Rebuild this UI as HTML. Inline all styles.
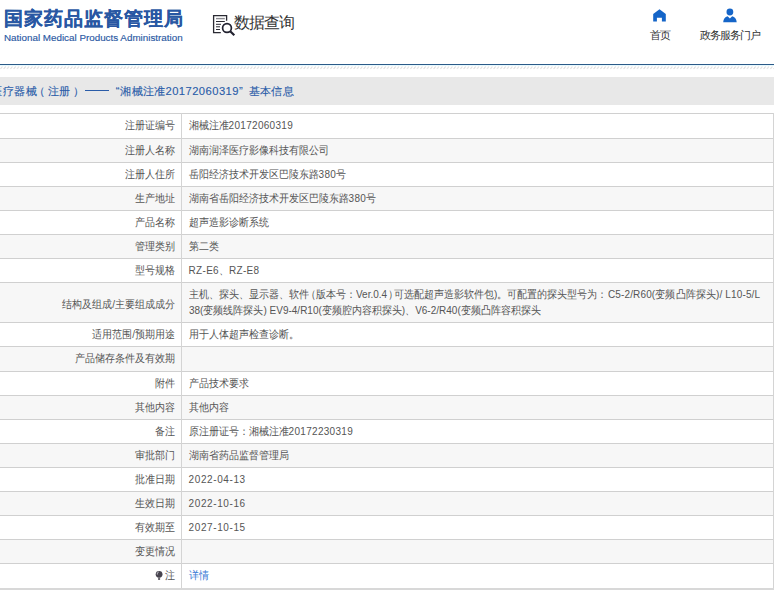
<!DOCTYPE html>
<html><head><meta charset="utf-8">
<style>
*{margin:0;padding:0;box-sizing:border-box}
html,body{width:774px;height:594px;overflow:hidden;background:#fff;font-family:"Liberation Sans",sans-serif;color:#333}
.abs{position:absolute}
.logo1{position:absolute;left:4px;top:6.5px;font-size:18.6px;font-weight:bold;color:#2857a3;letter-spacing:1px;white-space:nowrap;line-height:24px;-webkit-text-stroke:0.15px #2857a3}
.logo2{position:absolute;left:4px;top:32px;font-size:9.83px;color:#2a59a3;white-space:nowrap;line-height:12px;-webkit-text-stroke:0.15px #2a59a3}
.sq{position:absolute;left:234px;top:13px;font-size:16px;letter-spacing:-1.05px;color:#333;white-space:nowrap;line-height:20px}
.nav{position:absolute;top:29px;font-size:10.5px;letter-spacing:-1.05px;color:#333;white-space:nowrap;line-height:12px}
.bl{position:absolute;left:0;top:64px;width:774px;height:1px;background:#2c5a88}
.cy{position:absolute;left:0;top:65px;width:774px;height:1px;background:#e6f8fd}
.hatch{position:absolute;left:0;top:66px;width:774px;height:3px;background:repeating-linear-gradient(135deg,#fff 0,#fff 1.4px,#e2e2e2 1.4px,#e2e2e2 2.4px)}
.crumb{position:absolute;left:0;top:77px;width:774px;height:28px;background:#e8e8e8}
.ct{position:absolute;top:84px;font-size:11.2px;color:#2a5ca8;-webkit-text-stroke:0.12px #2a5ca8;white-space:nowrap;line-height:14px}
.dash{position:absolute;left:85px;top:90px;width:24px;height:1px;background:#2a5ca8}
.r{position:absolute;left:-10px;width:784px;border-top:1px solid #d0d0d0}
.r .l{position:absolute;left:0;width:185px;top:0;bottom:0;text-align:right;font-size:10px;line-height:22px;color:#555;white-space:nowrap}
.r .v{position:absolute;left:198.6px;top:0;font-size:10px;line-height:22px;color:#555;white-space:nowrap}
.dbl .l{line-height:39px}
.r .l,.r .v{transform:translateY(1px) scaleY(1.1);transform-origin:50% 11px}
.seg,.seg2{transform:scaleY(1.1);transform-origin:50% 8px}
.seg{position:absolute;top:287px;font-size:10px;line-height:16px;color:#555;white-space:nowrap}
.seg2{position:absolute;left:189px;top:303px;font-size:10px;line-height:16px;color:#555;white-space:nowrap}
.vline{position:absolute;left:181px;top:113px;width:1px;height:476px;background:#d4d4d4}
.rline{position:absolute;left:773px;top:113px;width:1px;height:476px;background:#d4d4d4}
.bot{position:absolute;left:0;top:588px;width:774px;height:2px;background:#d8d8d8}
.lnk{color:#3a7bd5}
.n{letter-spacing:0.3px}
.n2{letter-spacing:0.6px}
</style></head><body>
<div class="logo1">国家药品监督管理局</div>
<div class="logo2">National Medical Products Administration</div>
<svg class="abs" style="left:206px;top:8px" width="40" height="34" viewBox="206 8 40 34">
<path d="M220.8 32.6H213.6V15.6H226.6V20.8" fill="none" stroke="#2a2a33" stroke-width="1.3"/>
<path d="M216 18.6h8.8" stroke="#8a8a90" stroke-width="1.4"/>
<path d="M216 21.5h8.8M216 24.3h5M216 26.8h4M216 29.5h4" stroke="#2a2a33" stroke-width="1"/>
<circle cx="227" cy="28" r="4.4" fill="none" stroke="#222230" stroke-width="1.7"/>
<path d="M230.2 31.2L234.3 35.3" stroke="#222230" stroke-width="2.2"/>
</svg>
<div class="sq">数据查询</div>
<svg class="abs" style="left:646px;top:4px" width="26" height="22" viewBox="646 4 26 22">
<path d="M659.5 9.2L653.2 14V21.6H656.9V17.7H661.9V21.6H665.8V14Z" fill="#1565c8"/>
</svg>
<div class="nav" style="left:650px;letter-spacing:-1px">首页</div>
<svg class="abs" style="left:718px;top:4px" width="26" height="22" viewBox="718 4 26 22">
<circle cx="729.9" cy="12" r="3.4" fill="#1565c8"/>
<path d="M723.2 22.3C723.4 19 725 17 727.6 16.2L729.9 18.5L732.2 16.2C734.8 17 736.5 19 736.7 22.3Z" fill="#1565c8"/>
</svg>
<div class="nav" style="left:700px">政务服务门户</div>
<div class="bl"></div>
<div class="cy"></div><svg class="abs" style="left:0;top:65px" width="774" height="5"><defs><pattern id="hp" width="3.333" height="5" patternUnits="userSpaceOnUse"><path d="M0.4 3.9L2.4 1.5" stroke="#d6d6d6" stroke-width="0.85"/></pattern></defs><rect width="774" height="5" fill="url(#hp)"/></svg>
<div class="crumb"></div>
<div class="ct" style="left:-8.6px;letter-spacing:0.5px">医疗器械</div>
<div class="ct" style="left:34px">（</div>
<div class="ct" style="left:48px">注册</div>
<div class="ct" style="left:72.5px">）</div>
<div class="dash"></div>
<div class="ct" style="left:115.8px">“</div>
<div class="ct" style="left:120.4px;letter-spacing:0.3px">湘械注准</div>
<div class="ct" style="left:165.5px;letter-spacing:0.45px">20172060319</div>
<div class="ct" style="left:239px">”</div>
<div class="ct" style="left:248.5px;letter-spacing:0.35px">基本信息</div>
<div class="r" style="top:113px;height:25px;background:#ffffff"><div class="l">注册证编号</div><div class="v">湘械注准<span class="n">20172060319</span></div></div><div class="r" style="top:138px;height:24px;background:#f7f7f7"><div class="l">注册人名称</div><div class="v">湖南润泽医疗影像科技有限公司</div></div><div class="r" style="top:162px;height:24px;background:#ffffff"><div class="l">注册人住所</div><div class="v">岳阳经济技术开发区巴陵东路<span class="n">380</span>号</div></div><div class="r" style="top:186px;height:24px;background:#f7f7f7"><div class="l">生产地址</div><div class="v">湖南省岳阳经济技术开发区巴陵东路<span class="n">380</span>号</div></div><div class="r" style="top:210px;height:24px;background:#ffffff"><div class="l">产品名称</div><div class="v">超声造影诊断系统</div></div><div class="r" style="top:234px;height:24px;background:#f7f7f7"><div class="l">管理类别</div><div class="v">第二类</div></div><div class="r" style="top:258px;height:24px;background:#ffffff"><div class="l">型号规格</div><div class="v"><span class="n">RZ-E6</span>、<span class="n">RZ-E8</span></div></div><div class="r dbl" style="top:282px;height:40px;background:#f7f7f7"><div class="l">结构及组成/主要组成成分</div></div><div class="r" style="top:322px;height:24px;background:#ffffff"><div class="l">适用范围/预期用途</div><div class="v">用于人体超声检查诊断。</div></div><div class="r" style="top:346px;height:25px;background:#f7f7f7"><div class="l">产品储存条件及有效期</div><div class="v"></div></div><div class="r" style="top:371px;height:24px;background:#ffffff"><div class="l">附件</div><div class="v">产品技术要求</div></div><div class="r" style="top:395px;height:24px;background:#f7f7f7"><div class="l">其他内容</div><div class="v">其他内容</div></div><div class="r" style="top:419px;height:24px;background:#ffffff"><div class="l">备注</div><div class="v">原注册证号：湘械注准<span class="n">20172230319</span></div></div><div class="r" style="top:443px;height:24px;background:#f7f7f7"><div class="l">审批部门</div><div class="v">湖南省药品监督管理局</div></div><div class="r" style="top:467px;height:24px;background:#ffffff"><div class="l">批准日期</div><div class="v"><span class="n2">2022-04-13</span></div></div><div class="r" style="top:491px;height:24px;background:#f7f7f7"><div class="l">生效日期</div><div class="v"><span class="n2">2022-10-16</span></div></div><div class="r" style="top:515px;height:24px;background:#ffffff"><div class="l">有效期至</div><div class="v"><span class="n2">2027-10-15</span></div></div><div class="r" style="top:539px;height:24px;background:#f7f7f7"><div class="l">变更情况</div><div class="v"></div></div><div class="r" style="top:563px;height:26px;background:#ffffff"><div class="l">注</div><div class="v"><span class="lnk">详情</span></div></div>
<div class="seg" style="left:189px;">主机、探头、显示器、软件</div><div class="seg" style="left:306px;">（版本号：</div><div class="seg" style="left:356px;">Ver.0.4</div><div class="seg" style="left:388px;">）</div><div class="seg" style="left:394px;">可选配超声造影软件包)。</div><div class="seg" style="left:507px;">可配置的探头型号为：</div><div class="seg" style="left:608px;letter-spacing:0.13px">C5-2/R60(变频凸阵探头)/ L10-5/L</div>
<div class="seg2">38(变频线阵探头) EV9-4/R10(变频腔内容积探头)、V6-2/R40(变频凸阵容积探头</div>
<svg class="abs" style="left:150px;top:566px" width="16" height="18" viewBox="150 566 16 18">
<circle cx="159.1" cy="574.3" r="3.4" fill="#47444e"/><rect x="158.1" y="577.4" width="2" height="2.6" fill="#6a6870"/><path d="M157.3 574.6A2 2 0 0 1 158.8 572" fill="none" stroke="#d8d8de" stroke-width="0.8"/>
</svg>
<div class="vline"></div>
<div class="rline"></div>
<div class="bot"></div>
</body></html>
